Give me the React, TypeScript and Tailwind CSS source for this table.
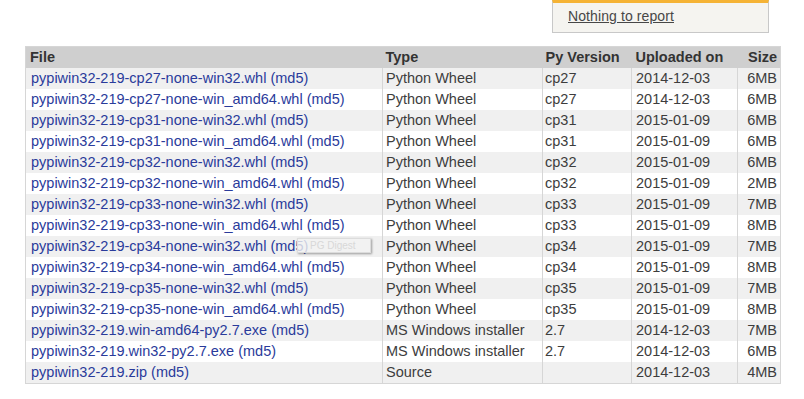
import React from "react";

type Row = {
  file: string;
  type: string;
  py: string;
  date: string;
  size: string;
};

const rows: Row[] = [
  { file: "pypiwin32-219-cp27-none-win32.whl", type: "Python Wheel", py: "cp27", date: "2014-12-03", size: "6MB" },
  { file: "pypiwin32-219-cp27-none-win_amd64.whl", type: "Python Wheel", py: "cp27", date: "2014-12-03", size: "6MB" },
  { file: "pypiwin32-219-cp31-none-win32.whl", type: "Python Wheel", py: "cp31", date: "2015-01-09", size: "6MB" },
  { file: "pypiwin32-219-cp31-none-win_amd64.whl", type: "Python Wheel", py: "cp31", date: "2015-01-09", size: "6MB" },
  { file: "pypiwin32-219-cp32-none-win32.whl", type: "Python Wheel", py: "cp32", date: "2015-01-09", size: "6MB" },
  { file: "pypiwin32-219-cp32-none-win_amd64.whl", type: "Python Wheel", py: "cp32", date: "2015-01-09", size: "2MB" },
  { file: "pypiwin32-219-cp33-none-win32.whl", type: "Python Wheel", py: "cp33", date: "2015-01-09", size: "7MB" },
  { file: "pypiwin32-219-cp33-none-win_amd64.whl", type: "Python Wheel", py: "cp33", date: "2015-01-09", size: "8MB" },
  { file: "pypiwin32-219-cp34-none-win32.whl", type: "Python Wheel", py: "cp34", date: "2015-01-09", size: "7MB" },
  { file: "pypiwin32-219-cp34-none-win_amd64.whl", type: "Python Wheel", py: "cp34", date: "2015-01-09", size: "8MB" },
  { file: "pypiwin32-219-cp35-none-win32.whl", type: "Python Wheel", py: "cp35", date: "2015-01-09", size: "7MB" },
  { file: "pypiwin32-219-cp35-none-win_amd64.whl", type: "Python Wheel", py: "cp35", date: "2015-01-09", size: "8MB" },
  { file: "pypiwin32-219.win-amd64-py2.7.exe", type: "MS Windows installer", py: "2.7", date: "2014-12-03", size: "7MB" },
  { file: "pypiwin32-219.win32-py2.7.exe", type: "MS Windows installer", py: "2.7", date: "2014-12-03", size: "6MB" },
  { file: "pypiwin32-219.zip", type: "Source", py: "", date: "2014-12-03", size: "4MB" },
];

const cell = "h-[21px] px-[4px] py-0 border-x border-[#d6d6d6] whitespace-nowrap align-middle";

export default function App() {
  return (
    <div className="w-[804px] h-[399px] bg-white overflow-hidden text-[14.5px] leading-[21px] text-[#3d3d3d]" style={{ fontFamily: '"Liberation Sans", Arial, sans-serif' }}>
      <div className="flex justify-end pr-[35px]">
        <div className="w-[217px] h-[33px] bg-[#f5f4f0] border border-t-0 border-[#c8c8c8] border-t-[#f5b335] pl-[15px] pt-[3px]" style={{ borderTopWidth: 3, borderTopStyle: "solid" }}>
          <a href="#" className="underline text-[#474747] leading-[18px] text-[14px] tracking-[0.1px]">Nothing to report</a>
        </div>
      </div>

      <div className="pl-[25px] pt-[13px]">
        <div className="relative w-[755px]">
          <table className="w-[755px] border-collapse table-fixed border border-[#d6d6d6]">
            <colgroup>
              <col className="w-[357px]" />
              <col className="w-[160px]" />
              <col className="w-[89px]" />
              <col className="w-[106px]" />
              <col className="w-[43px]" />
            </colgroup>
            <thead>
              <tr className="bg-[#cfcfcf] text-[#333] font-bold">
                <th className="h-[21px] px-[4px] text-left">File</th>
                <th className="h-[21px] px-[3px] text-left">Type</th>
                <th className="h-[21px] px-[3px] text-left">Py Version</th>
                <th className="h-[21px] px-[4px] text-left">Uploaded on</th>
                <th className="h-[21px] px-[3px] text-right">Size</th>
              </tr>
            </thead>
            <tbody>
              {rows.map((r, i) => (
                <tr key={r.file} className={i % 2 === 0 ? "bg-[#f0f0f0]" : "bg-white"}>
                  <td className={`${cell} pl-[5px]`}>
                    <a href="#" className="text-[#2a3b9b]">{r.file}</a>{" "}
                    <a href="#" className="text-[#2a3b9b]">(md5)</a>
                  </td>
                  <td className={`${cell} pl-[3px]`}>{r.type}</td>
                  <td className={`${cell} pl-[2px]`}>{r.py}</td>
                  <td className={`${cell} pl-[4px]`}>{r.date}</td>
                  <td className={`${cell} pr-[3px] text-right`}>{r.size}</td>
                </tr>
              ))}
            </tbody>
          </table>
          <div className="absolute left-[272px] top-[192px] w-[74px] h-[15px] bg-[#f2f2f2]/80 border border-[#dcdcdc] shadow-[1px_1px_2px_rgba(0,0,0,0.35)] text-[10px] leading-[13px] text-[#d8d8d8] pl-[12px]">
            PG Digest
          </div>
        </div>
      </div>
    </div>
  );
}
